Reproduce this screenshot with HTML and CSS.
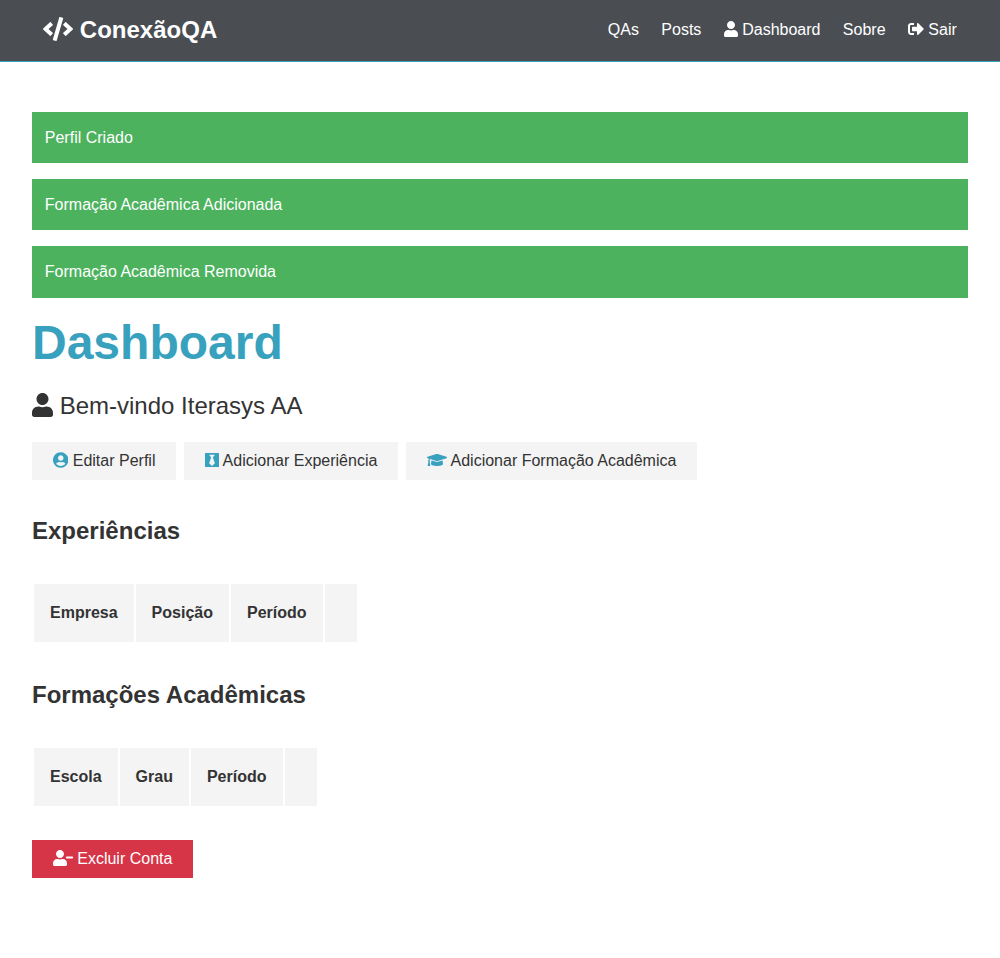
FILE: index.html
```html
<!DOCTYPE html>
<html lang="pt-BR">
<head>
  <meta charset="UTF-8" />
  <meta name="viewport" content="width=device-width, initial-scale=1.0"/>
  <title>ConexãoQA</title>
  <link rel="stylesheet" href="styles.css">
</head>
<body>
  <nav class="navbar">
    <h1 class="brand">
      <a href="#">
        <svg class="icon icon-wide" viewBox="0 0 640 512"><path d="M278.9 511.5l-61-17.7c-6.4-1.8-10-8.5-8.2-14.9L346.2 8.7c1.8-6.4 8.5-10 14.9-8.2l61 17.7c6.4 1.8 10 8.5 8.2 14.9L293.8 503.3c-1.9 6.4-8.5 10.1-14.9 8.2zm-114-112.2l43.5-46.4c4.6-4.9 4.3-12.7-.8-17.2L117 256l90.6-79.7c5.1-4.5 5.5-12.3.8-17.2l-43.5-46.4c-4.5-4.8-12.1-5.1-17-.5L3.8 247.2c-5.1 4.7-5.1 12.8 0 17.5l144.1 135.1c4.9 4.6 12.5 4.4 17-.5zm327.2.6l144.1-135.1c5.1-4.7 5.1-12.8 0-17.5L492.1 112.1c-4.8-4.5-12.4-4.3-17 .5L431.6 159c-4.6 4.9-4.3 12.7.8 17.2L523 256l-90.6 79.7c-5.1 4.5-5.5 12.3-.8 17.2l43.5 46.4c4.5 4.9 12.1 5.1 17 .6z"/></svg>
        ConexãoQA
      </a>
    </h1>
    <ul class="nav-links">
      <li><a href="#">QAs</a></li>
      <li><a href="#">Posts</a></li>
      <li><a href="#">
        <svg class="icon" viewBox="0 0 448 512"><path d="M224 256c70.7 0 128-57.3 128-128S294.7 0 224 0 96 57.3 96 128s57.3 128 128 128zm89.6 32h-16.7c-22.2 10.2-46.9 16-72.9 16s-50.6-5.8-72.9-16h-16.7C60.2 288 0 348.2 0 422.4V464c0 26.5 21.5 48 48 48h352c26.5 0 48-21.5 48-48v-41.6c0-74.2-60.2-134.4-134.4-134.4z"/></svg>
        Dashboard</a></li>
      <li><a href="#">Sobre</a></li>
      <li><a href="#">
        <svg class="icon icon-square" viewBox="0 0 512 512"><path d="M497 273L329 441c-15 15-41 4.5-41-17v-96H152c-13.3 0-24-10.7-24-24v-96c0-13.3 10.7-24 24-24h136V88c0-21.4 25.9-32 41-17l168 168c9.3 9.4 9.3 24.6 0 34zM192 436v-40c0-6.6-5.4-12-12-12H96c-17.7 0-32-14.3-32-32V160c0-17.7 14.3-32 32-32h84c6.6 0 12-5.4 12-12V76c0-6.6-5.4-12-12-12H96c-53 0-96 43-96 96v192c0 53 43 96 96 96h84c6.6 0 12-5.4 12-12z"/></svg>
        Sair</a></li>
    </ul>
  </nav>

  <section class="container">
    <div class="alert">Perfil Criado</div>
    <div class="alert">Formação Acadêmica Adicionada</div>
    <div class="alert">Formação Acadêmica Removida</div>

    <h1 class="large">Dashboard</h1>
    <p class="lead">
      <svg class="icon" viewBox="0 0 448 512"><path d="M224 256c70.7 0 128-57.3 128-128S294.7 0 224 0 96 57.3 96 128s57.3 128 128 128zm89.6 32h-16.7c-22.2 10.2-46.9 16-72.9 16s-50.6-5.8-72.9-16h-16.7C60.2 288 0 348.2 0 422.4V464c0 26.5 21.5 48 48 48h352c26.5 0 48-21.5 48-48v-41.6c0-74.2-60.2-134.4-134.4-134.4z"/></svg>
      Bem-vindo Iterasys AA
    </p>

    <div class="dash-buttons">
      <a href="#" class="btn">
        <svg class="icon icon-circle icon-primary" viewBox="0 0 496 512"><path d="M248 8C111 8 0 119 0 256s111 248 248 248 248-111 248-248S385 8 248 8zm0 96c48.6 0 88 39.4 88 88s-39.4 88-88 88-88-39.4-88-88 39.4-88 88-88zm0 344c-58.7 0-111.3-26.6-146.5-68.2 18.8-35.4 55.6-59.8 98.5-59.8 2.4 0 4.8.4 7.1 1.1 13 4.2 26.6 6.9 40.9 6.9 14.3 0 28-2.7 40.9-6.9 2.3-.7 4.7-1.1 7.1-1.1 42.9 0 79.7 24.4 98.5 59.8C359.3 421.4 306.7 448 248 448z"/></svg>
        Editar Perfil</a>
      <a href="#" class="btn">
        <svg class="icon icon-primary" viewBox="0 0 448 512"><path d="M0 32v448h448V32H0zm316.5 325.2L224 445.9l-92.5-88.7 64.5-184-64.5-86.6h184.9L251 173.2l65.5 184z"/></svg>
        Adicionar Experiência</a>
      <a href="#" class="btn">
        <svg class="icon icon-wide icon-primary" viewBox="0 0 640 512"><path d="M622.34 153.2L343.4 67.5c-15.2-4.67-31.6-4.67-46.79 0L17.66 153.2c-23.54 7.23-23.54 38.36 0 45.59l48.63 14.94c-10.67 13.19-17.23 29.28-17.88 46.9C38.78 266.15 32 276.11 32 288c0 10.78 5.68 19.85 13.86 25.65L20.33 428.53C18.11 438.52 25.71 448 35.94 448h56.11c10.24 0 17.84-9.48 15.62-19.47L82.14 313.65C90.32 307.85 96 298.78 96 288c0-11.57-6.47-21.25-15.66-26.87.76-15.02 8.44-28.3 20.69-36.72L296.6 284.5c9.06 2.78 26.44 6.25 46.79 0l278.95-85.7c23.55-7.24 23.55-38.36 0-45.6zM352.79 315.09c-28.53 8.76-52.84 3.92-65.59 0l-145.02-44.55L128 384c0 35.35 85.96 64 192 64s192-28.65 192-64l-14.18-113.47-145.03 44.56z"/></svg>
        Adicionar Formação Acadêmica</a>
    </div>

    <h2 class="section-title">Experiências</h2>
    <table class="table">
      <thead>
        <tr>
          <th>Empresa</th>
          <th>Posição</th>
          <th>Período</th>
          <th class="empty"></th>
        </tr>
      </thead>
      <tbody></tbody>
    </table>

    <h2 class="section-title">Formações Acadêmicas</h2>
    <table class="table">
      <thead>
        <tr>
          <th>Escola</th>
          <th>Grau</th>
          <th>Período</th>
          <th class="empty"></th>
        </tr>
      </thead>
      <tbody></tbody>
    </table>

    <button class="btn btn-danger">
      <svg class="icon icon-wide" viewBox="0 0 640 512"><path d="M624 208H432c-8.8 0-16 7.2-16 16v32c0 8.8 7.2 16 16 16h192c8.8 0 16-7.2 16-16v-32c0-8.8-7.2-16-16-16zm-400 48c70.7 0 128-57.3 128-128S294.7 0 224 0 96 57.3 96 128s57.3 128 128 128zm89.6 32h-16.7c-22.2 10.2-46.9 16-72.9 16s-50.6-5.8-72.9-16h-16.7C60.2 288 0 348.2 0 422.4V464c0 26.5 21.5 48 48 48h352c26.5 0 48-21.5 48-48v-41.6c0-74.2-60.2-134.4-134.4-134.4z"/></svg>
      Excluir Conta
    </button>
  </section>
</body>
</html>
```

FILE: styles.css
```css
* {
  box-sizing: border-box;
  margin: 0;
  padding: 0;
}
body {
  font-family: "Liberation Sans", Arial, sans-serif;
  font-size: 1rem;
  line-height: 1.6;
  background-color: #fff;
  color: #333;
}
a {
  color: inherit;
  text-decoration: none;
}
ul {
  list-style: none;
}
.icon {
  display: inline-block;
  width: 0.875em;
  height: 1em;
  vertical-align: -0.125em;
  fill: currentColor;
}
.icon-wide {
  width: 1.25em;
}
.icon-square {
  width: 1em;
}
.icon-circle {
  width: 0.969em;
}
.icon-primary {
  fill: #38a1bd;
}

.navbar {
  display: flex;
  align-items: center;
  justify-content: space-between;
  height: 62px;
  padding: 0 2rem;
  background-color: #4a4e53;
  border-bottom: 1px solid #38a1bd;
  color: #fff;
}
.brand {
  margin: 0 0.7rem;
  font-size: 1.5rem;
  font-weight: bold;
}
.nav-links {
  display: flex;
  margin-bottom: 2px;
}
.nav-links a {
  margin: 0 0.25rem;
  padding: 0.45rem;
}

.container {
  padding: 50px 2rem 0;
}
.alert {
  margin-bottom: 1rem;
  padding: 0.8rem;
  background-color: #4cb25e;
  color: #fff;
}
.large {
  margin-bottom: 1rem;
  font-size: 3rem;
  line-height: 1.2;
  color: #38a1bd;
}
.lead {
  margin-bottom: 1rem;
  font-size: 1.5rem;
}
.dash-buttons {
  display: flex;
  gap: 0.5rem;
  margin-bottom: 2rem;
}
.btn {
  display: inline-block;
  padding: 0.4rem 1.3rem;
  border: none;
  background-color: #f4f4f4;
  color: #333;
  font: inherit;
}
.btn-danger {
  background-color: #d63447;
  color: #fff;
}
.section-title {
  font-size: 1.5rem;
  font-weight: bold;
}
.table {
  margin: 2rem 0;
  border-spacing: 2px;
}
.table th {
  padding: 1rem;
  text-align: left;
  background-color: #f4f4f4;
}
```
